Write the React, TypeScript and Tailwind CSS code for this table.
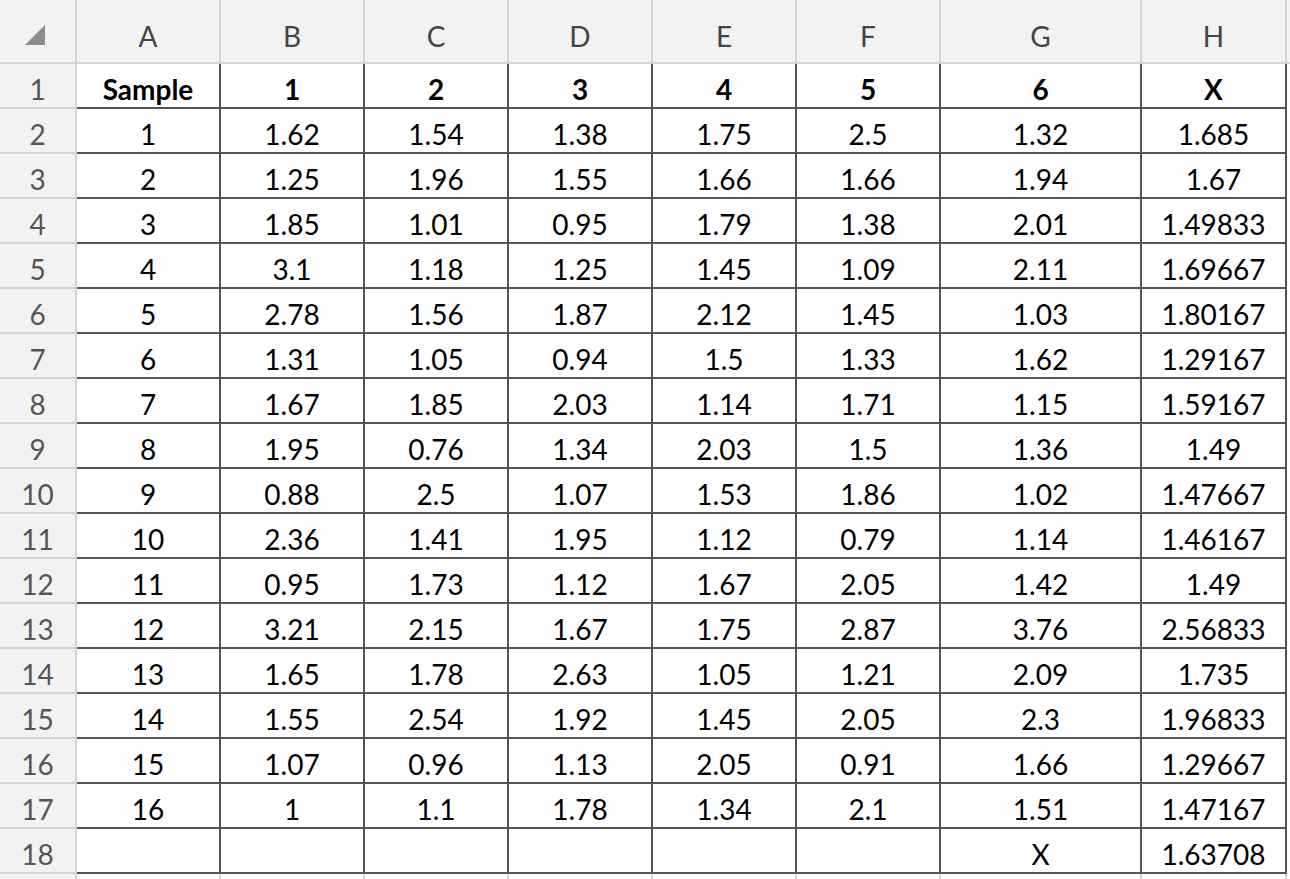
const COLS = ["A", "B", "C", "D", "E", "F", "G", "H"];

const HEAD = ["Sample", "1", "2", "3", "4", "5", "6", "X"];

const ROWS: string[][] = [
  ["1", "1.62", "1.54", "1.38", "1.75", "2.5", "1.32", "1.685"],
  ["2", "1.25", "1.96", "1.55", "1.66", "1.66", "1.94", "1.67"],
  ["3", "1.85", "1.01", "0.95", "1.79", "1.38", "2.01", "1.49833"],
  ["4", "3.1", "1.18", "1.25", "1.45", "1.09", "2.11", "1.69667"],
  ["5", "2.78", "1.56", "1.87", "2.12", "1.45", "1.03", "1.80167"],
  ["6", "1.31", "1.05", "0.94", "1.5", "1.33", "1.62", "1.29167"],
  ["7", "1.67", "1.85", "2.03", "1.14", "1.71", "1.15", "1.59167"],
  ["8", "1.95", "0.76", "1.34", "2.03", "1.5", "1.36", "1.49"],
  ["9", "0.88", "2.5", "1.07", "1.53", "1.86", "1.02", "1.47667"],
  ["10", "2.36", "1.41", "1.95", "1.12", "0.79", "1.14", "1.46167"],
  ["11", "0.95", "1.73", "1.12", "1.67", "2.05", "1.42", "1.49"],
  ["12", "3.21", "2.15", "1.67", "1.75", "2.87", "3.76", "2.56833"],
  ["13", "1.65", "1.78", "2.63", "1.05", "1.21", "2.09", "1.735"],
  ["14", "1.55", "2.54", "1.92", "1.45", "2.05", "2.3", "1.96833"],
  ["15", "1.07", "0.96", "1.13", "2.05", "0.91", "1.66", "1.29667"],
  ["16", "1", "1.1", "1.78", "1.34", "2.1", "1.51", "1.47167"],
  ["", "", "", "", "", "", "X", "1.63708"],
];

const headCell =
  "flex items-end justify-center border-r-2 border-b-2 border-[#d4d4d4] bg-[#f2f2f2] pb-[12px] text-[#444444]";
const rowHeadCell =
  "flex items-end justify-center border-r-2 border-b-2 border-[#d4d4d4] bg-[#f2f2f2] pb-[4px] text-[#555555]";
const dataCell =
  "flex items-end justify-center border-r-2 border-b-2 border-[#555555] bg-white pb-[4px] text-black";
const blankCell = "border-r-2 border-[#d4d4d4] bg-white";

export default function App() {
  return (
    <div
      className="grid h-[879px] w-[1290px] overflow-hidden bg-white text-[28px] leading-[28px]"
      style={{ fontFamily: "Lato, 'Open Sans', sans-serif" }}
    >
      <div className="grid grid-cols-[77px_144px_144px_144px_144px_144px_144px_201px_145px_1fr] grid-rows-[64px_repeat(18,45px)_1fr]">
        {/* column header row */}
        <div className="relative border-r-2 border-b-2 border-[#d4d4d4] bg-[#f2f2f2]">
          <svg className="absolute left-[25px] top-[25px]" width="20" height="20" viewBox="0 0 20 20">
            <polygon points="20,0 20,20 0,20" fill="#8c8c8c" />
          </svg>
        </div>
        {COLS.map((c) => (
          <div key={c} className={headCell}>
            {c}
          </div>
        ))}
        <div className="border-b-2 border-[#d4d4d4] bg-[#f2f2f2]" />

        {/* row 1 */}
        <div className={rowHeadCell}>1</div>
        {HEAD.map((h, i) => (
          <div key={i} className={`${dataCell} font-bold`}>
            {h}
          </div>
        ))}
        <div className="bg-white" />

        {/* rows 2 - 18 */}
        {ROWS.map((r, ri) => [
          <div key={`h${ri}`} className={rowHeadCell}>
            {ri + 2}
          </div>,
          ...r.map((v, ci) => (
            <div key={`c${ri}-${ci}`} className={dataCell}>
              {v}
            </div>
          )),
          <div key={`e${ri}`} className="bg-white" />,
        ])}

        {/* row 19, cut off */}
        <div className="border-r-2 border-[#d4d4d4] bg-[#f2f2f2]" />
        {COLS.map((c) => (
          <div key={`b${c}`} className={blankCell} />
        ))}
        <div className="bg-white" />
      </div>
    </div>
  );
}
